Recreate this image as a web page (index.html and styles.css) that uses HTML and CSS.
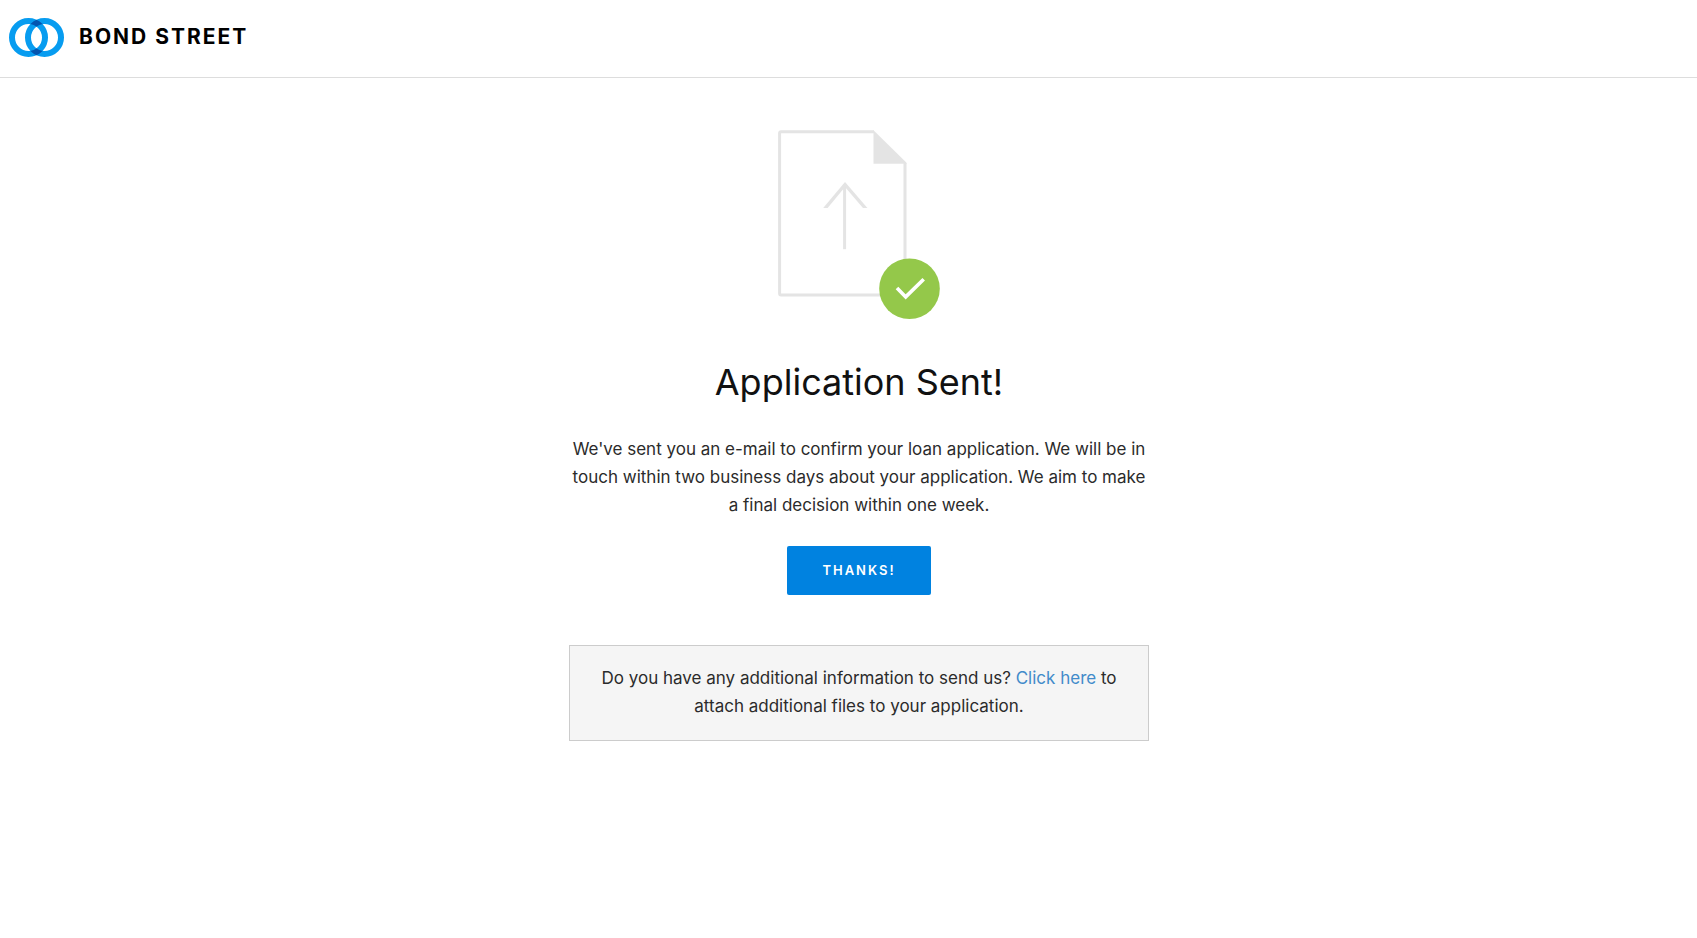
FILE: index.html
```
<!DOCTYPE html>
<html lang="en">
<head>
    <meta charset="UTF-8">
    <meta name="viewport" content="width=device-width, initial-scale=1.0">
    <title>Bond Street</title>
    <link rel="stylesheet" href="styles.css">
</head>
<body>
    <header class="header">
        <a class="brand" href="#">
            <svg class="brand-logo" width="55" height="39" viewBox="0 0 55 39" fill="none" aria-hidden="true">
                <clipPath id="ring">
                    <path clip-rule="evenodd" d="M0 19.5a19.5 19.5 0 1 1 39 0a19.5 19.5 0 1 1 -39 0zM6 19.5a13.5 13.5 0 1 0 27 0a13.5 13.5 0 1 0 -27 0z"/>
                </clipPath>
                <circle cx="19.5" cy="19.5" r="16.5" stroke="#079cf0" stroke-width="6"/>
                <circle cx="35.5" cy="19.5" r="16.5" stroke="#079cf0" stroke-width="6"/>
                <circle cx="35.5" cy="19.5" r="16.5" stroke="#0455b0" stroke-width="6" clip-path="url(#ring)"/>
            </svg>
            <span class="brand-name">BOND STREET</span>
        </a>
    </header>

    <main class="content">
        <svg class="sent-icon" width="162" height="190" viewBox="0 0 162 190" fill="none" aria-hidden="true">
            <path d="M96 1.8H3Q1.6 1.8 1.6 3.2V163.5Q1.6 164.9 3 164.9H127V33" stroke="#e4e4e4" stroke-width="3"/>
            <path d="M95.5 0.3L128.5 32.8V33.8H95.5z" fill="#e4e4e4"/>
            <path d="M66.6 54V119.2" stroke="#e4e4e4" stroke-width="3"/>
            <path d="M45.2 78L67 52L89.4 78H85L67 57L49.6 78z" fill="#e4e4e4"/>
            <circle cx="131.5" cy="158.7" r="30.3" fill="#94c84a"/>
            <path d="M119 157.9L127.7 166.9L145.7 149.2" stroke="#fff" stroke-width="3.6"/>
        </svg>

        <h1>Application Sent!</h1>
        <p class="message">We've sent you an e-mail to confirm your loan application. We will be in touch within two business days about your application. We aim to make a final decision within one week.</p>
        <button class="button" type="button">THANKS!</button>

        <div class="more-info">
            <p>Do you have any additional information to send us? <a href="#">Click here</a> to attach additional files to your application.</p>
        </div>
    </main>
</body>
</html>
```

FILE: styles.css
```
* {
    box-sizing: border-box;
}
body {
    margin: 0;
    background: #fff;
    color: #2b2b2b;
    font-family: Inter, "Liberation Sans", sans-serif;
    font-size: 17px;
    line-height: 28px;
}
.header {
    display: flex;
    padding: 18px 9px 20px;
    border-bottom: 1px solid #ddd;
}
.brand {
    display: flex;
    align-items: center;
    gap: 15px;
    color: #000;
    text-decoration: none;
}
.brand-name {
    padding-bottom: 1px;
    font-size: 21px;
    font-weight: 700;
    letter-spacing: 2px;
}
.content {
    display: flex;
    flex-direction: column;
    align-items: center;
    padding: 52px 0 60px 21px;
}
h1 {
    margin: 38px 0 29px;
    color: #111;
    font-size: 36px;
    font-weight: 400;
    line-height: 48px;
}
p {
    margin: 0;
    text-align: center;
}
.message {
    max-width: 580px;
}
.button {
    margin: 27px 0 50px;
    padding: 0 35px 2px;
    height: 49px;
    border: none;
    border-radius: 2px;
    background: #0082e0;
    color: #fff;
    font-family: inherit;
    font-size: 13px;
    font-weight: 600;
    letter-spacing: 2px;
    cursor: pointer;
}
.button:hover {
    background: #0072c6;
}
.more-info {
    width: 100%;
    max-width: 580px;
    padding: 18px 28px 20px;
    border: 1px solid #ccc;
    background: #f5f5f5;
}
.more-info a {
    color: #428bca;
    text-decoration: none;
}
.more-info a:hover {
    text-decoration: underline;
}
```
